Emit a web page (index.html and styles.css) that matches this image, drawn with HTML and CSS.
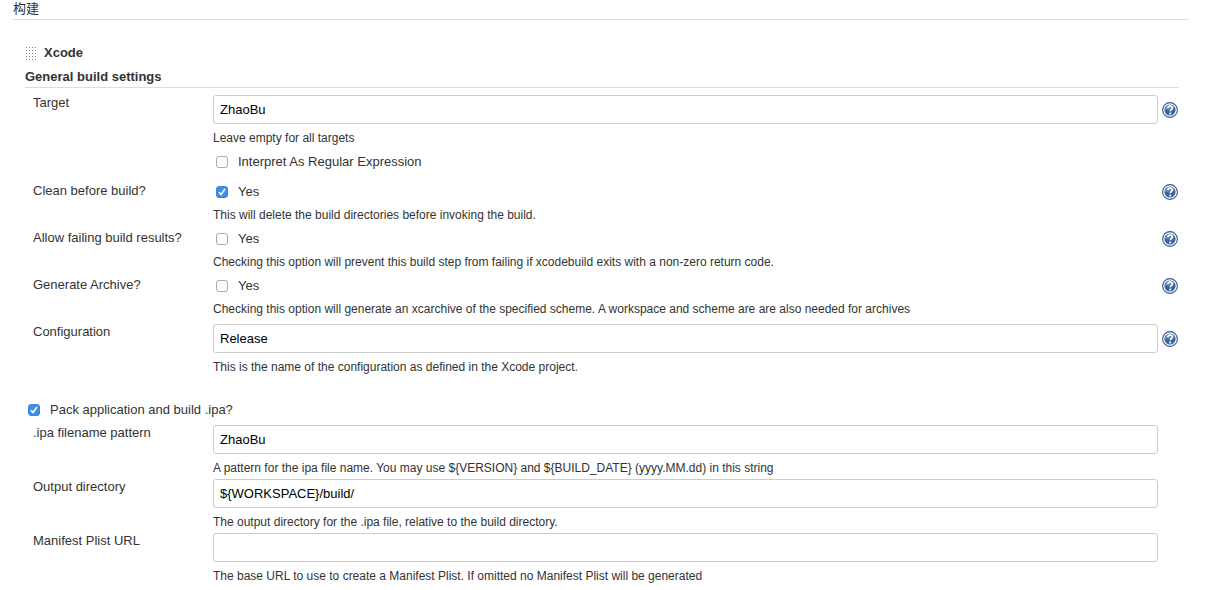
FILE: index.html
```html
<!DOCTYPE html>
<html lang="zh-CN">
<head>
<meta charset="utf-8">
<title>构建</title>
<link rel="stylesheet" href="styles.css">
</head>
<body>
<svg class="defs" aria-hidden="true">
  <symbol id="help" viewBox="0 0 16 16">
    <circle cx="8" cy="8" r="7.400" fill="#fff" stroke="#34598c" stroke-width="1.100"/>
    <circle cx="8" cy="8" r="5.600" fill="#3a659f"/>
    <path d="M3 8a5 5 0 0 1 9.500-2.200C10 8 7 7 3 8z" fill="#6d90bd"/>
    <path d="M5.800 6.100C5.900 4.600 6.800 4 8.100 4c1.400 0 2.300.8 2.300 1.900 0 1.700-2.100 1.700-2.100 3.300" fill="none" stroke="#fff" stroke-width="1.700"/>
    <circle cx="8.200" cy="11.500" r="1.100" fill="#fff"/>
  </symbol>
</svg>
<main class="page">
  <h1 class="section-title">构建</h1>
  <form class="step">
    <header class="step-header">
      <svg class="grip" width="11" height="14" viewBox="0 0 11 14" aria-hidden="true">
        <path d="M0 .5h11M0 3.500h11M0 6.500h11M0 9.500h11M0 12.500h11" stroke="#888" stroke-dasharray="1 2"/>
      </svg>
      <h2 class="heading">Xcode</h2>
    </header>
    <h3 class="heading group-title">General build settings</h3>

    <div class="row">
      <label class="label" for="target">Target</label>
      <div class="field">
        <div class="control"><input class="text" id="target" type="text" value="ZhaoBu"><button class="help" type="button" aria-label="Help: Target"><svg class="help-icon"><use href="#help"/></svg></button></div>
        <p class="hint">Leave empty for all targets</p>
        <label class="check extra"><input class="box" type="checkbox">Interpret As Regular Expression</label>
      </div>
    </div>
    <div class="row check-row">
      <span class="label" id="clean">Clean before build?</span>
      <div class="field">
        <div class="control"><label class="check"><input class="box" type="checkbox" aria-describedby="clean" checked>Yes</label><button class="help" type="button" aria-label="Help: Clean before build"><svg class="help-icon"><use href="#help"/></svg></button></div>
        <p class="hint">This will delete the build directories before invoking the build.</p>
      </div>
    </div>
    <div class="row check-row">
      <span class="label" id="allow">Allow failing build results?</span>
      <div class="field">
        <div class="control"><label class="check"><input class="box" type="checkbox" aria-describedby="allow">Yes</label><button class="help" type="button" aria-label="Help: Allow failing build results"><svg class="help-icon"><use href="#help"/></svg></button></div>
        <p class="hint">Checking this option will prevent this build step from failing if xcodebuild exits with a non-zero return code.</p>
      </div>
    </div>
    <div class="row check-row">
      <span class="label" id="archive">Generate Archive?</span>
      <div class="field">
        <div class="control"><label class="check"><input class="box" type="checkbox" aria-describedby="archive">Yes</label><button class="help" type="button" aria-label="Help: Generate Archive"><svg class="help-icon"><use href="#help"/></svg></button></div>
        <p class="hint">Checking this option will generate an xcarchive of the specified scheme. A workspace and scheme are are also needed for archives</p>
      </div>
    </div>
    <div class="row">
      <label class="label" for="configuration">Configuration</label>
      <div class="field">
        <div class="control"><input class="text" id="configuration" type="text" value="Release"><button class="help" type="button" aria-label="Help: Configuration"><svg class="help-icon"><use href="#help"/></svg></button></div>
        <p class="hint">This is the name of the configuration as defined in the Xcode project.</p>
      </div>
    </div>

    <label class="check pack"><input class="box" type="checkbox" checked>Pack application and build .ipa?</label>

    <div class="row">
      <label class="label" for="ipa">.ipa filename pattern</label>
      <div class="field">
        <div class="control"><input class="text" id="ipa" type="text" value="ZhaoBu"></div>
        <p class="hint">A pattern for the ipa file name. You may use ${VERSION} and ${BUILD_DATE} (yyyy.MM.dd) in this string</p>
      </div>
    </div>
    <div class="row">
      <label class="label" for="output">Output directory</label>
      <div class="field">
        <div class="control"><input class="text" id="output" type="text" value="${WORKSPACE}/build/"></div>
        <p class="hint">The output directory for the .ipa file, relative to the build directory.</p>
      </div>
    </div>
    <div class="row">
      <label class="label" for="manifest">Manifest Plist URL</label>
      <div class="field">
        <div class="control"><input class="text" id="manifest" type="text"></div>
        <p class="hint">The base URL to use to create a Manifest Plist. If omitted no Manifest Plist will be generated</p>
      </div>
    </div>
  </form>
</main>
</body>
</html>
```
FILE: styles.css
```css
* {
  box-sizing: border-box;
}

body {
  margin: 0;
  background: #fff;
  color: #333;
  font: 13px/16px "Liberation Sans", "Noto Sans CJK SC", sans-serif;
}

.defs {
  display: none;
}

.page {
  padding: 0 16px 0 13px;
}

.section-title {
  margin: 0;
  padding: 1px 0 2px;
  border-bottom: 1px solid #ddd;
  font-size: 13px;
  font-weight: 400;
}

.step {
  padding: 24px 10px 0 12px;
}

.step-header {
  display: flex;
  align-items: center;
  gap: 7px;
  height: 18px;
  padding-left: 1px;
}

.grip {
  margin-top: 2px;
}

.heading {
  margin: 0;
  font-size: 13px;
  font-weight: 700;
}

.group-title {
  margin-bottom: 7px;
  padding: 7px 0 2px;
  border-bottom: 1px solid #ddd;
}

.row {
  display: grid;
  grid-template-columns: 180px 1fr;
  padding-left: 8px;
}

.check-row {
  padding-bottom: 4px;
}

.control {
  display: grid;
  grid-template-columns: 1fr 21px;
  align-items: center;
}

.text {
  width: 100%;
  height: 29px;
  padding: 0 6px;
  border: 1px solid #ccc;
  border-radius: 3px;
  background: #fff;
  color: #000;
  font: inherit;
}

.help {
  justify-self: end;
  width: 16px;
  height: 16px;
  margin-right: 1px;
  padding: 0;
  border: 0;
  background: none;
}

.help-icon {
  display: block;
  width: 16px;
  height: 16px;
}

.hint {
  margin: 0;
  padding: 7px 0 3px;
  font-size: 12px;
  line-height: 15px;
}

.check {
  display: flex;
  align-items: center;
  gap: 10px;
  height: 18px;
  padding-left: 3px;
}

.box {
  appearance: none;
  flex: none;
  width: 12px;
  height: 12px;
  margin: 0;
  border: 1px solid #aaa;
  border-radius: 3px;
  background: #fff;
}

.box:checked {
  border-color: #3b86d8;
  background: #3f90e4 url("data:image/svg+xml,%3Csvg xmlns='http://www.w3.org/2000/svg' viewBox='0 0 10 10'%3E%3Cpath d='M2 5.300l2 2.200L8 2' fill='none' stroke='white' stroke-width='1.500'/%3E%3C/svg%3E") center / 10px 10px;
}

.extra {
  margin: 4px 0 12px;
}

.pack {
  margin: 23px 0 6px;
}
```
